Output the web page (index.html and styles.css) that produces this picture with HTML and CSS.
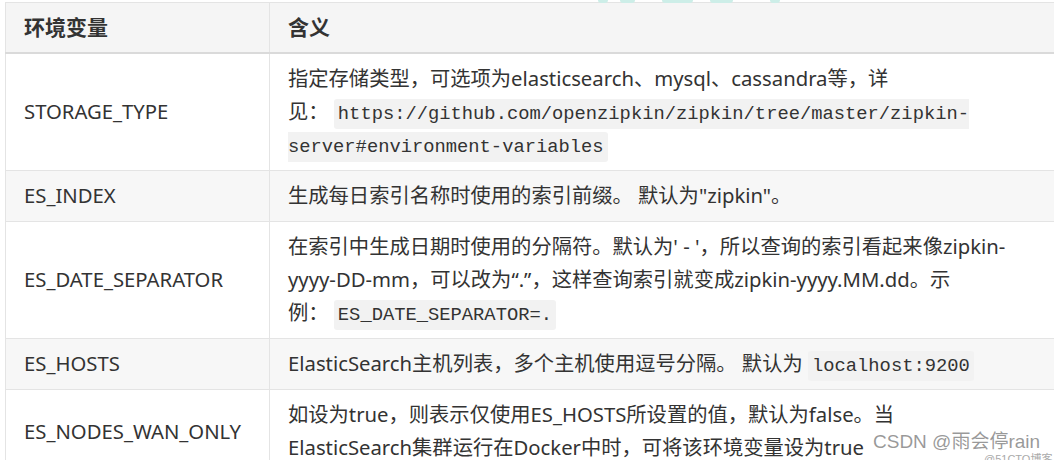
FILE: index.html
```html
<!DOCTYPE html>
<html lang="zh-CN">
<head>
  <meta charset="UTF-8">
  <title>Zipkin 环境变量</title>
  <link rel="stylesheet" href="styles.css">
</head>
<body>
  <div class="logo-bits">
    <span class="bit b1"></span>
    <span class="bit b2"></span>
    <span class="bit b3"></span>
    <span class="bit b4"></span>
    <span class="bit b5"></span>
  </div>

  <table class="env-table">
    <thead>
      <tr>
        <th class="name">环境变量</th>
        <th>含义</th>
      </tr>
    </thead>
    <tbody>
      <tr>
        <td class="name">STORAGE_TYPE</td>
        <td>指定存储类型，可选项为elasticsearch、mysql、cassandra等，详<br>见： <code>https://github.com/openzipkin/zipkin/tree/master/zipkin-<br>server#environment-variables</code></td>
      </tr>
      <tr class="alt">
        <td class="name">ES_INDEX</td>
        <td>生成每日索引名称时使用的索引前缀。 默认为"zipkin"。</td>
      </tr>
      <tr>
        <td class="name">ES_DATE_SEPARATOR</td>
        <td>在索引中生成日期时使用的分隔符。默认为' - '，所以查询的索引看起来像zipkin-<br>yyyy-DD-mm，可以改为“.”，这样查询索引就变成zipkin-yyyy.MM.dd。示<br>例： <code>ES_DATE_SEPARATOR=.</code></td>
      </tr>
      <tr class="alt">
        <td class="name">ES_HOSTS</td>
        <td>ElasticSearch主机列表，多个主机使用逗号分隔。 默认为 <code>localhost:9200</code></td>
      </tr>
      <tr>
        <td class="name">ES_NODES_WAN_ONLY</td>
        <td>如设为true，则表示仅使用ES_HOSTS所设置的值，默认为false。当<br>ElasticSearch集群运行在Docker中时，可将该环境变量设为true</td>
      </tr>
    </tbody>
  </table>

  <div class="watermark">CSDN @雨会停rain</div>
  <div class="watermark-small">@51CTO博客</div>
</body>
</html>
```

FILE: styles.css
```css
html, body {
  margin: 0;
  padding: 0;
  width: 100%;
  height: 100%;
  overflow: hidden;
  background: #fff;
}
body {
  padding: 2px 0 0 5px;
  box-sizing: border-box;
  position: relative;
  font-family: "Noto Sans", "Noto Sans CJK SC", sans-serif;
  font-size: 20.3px;
  color: #333;
}
.env-table {
  border-collapse: collapse;
  width: 1100px;
}
.env-table th,
.env-table td {
  border: 1px solid #e4e4e4;
  padding: 8px 18px 9px;
  line-height: 33px;
  text-align: left;
  vertical-align: middle;
  white-space: nowrap;
}
.env-table th {
  background: #f5f5f5;
  font-size: 21px;
  font-weight: bold;
  border-bottom: 2px solid #dadada;
  padding-top: 8px;
  padding-bottom: 8px;
}
.env-table .name {
  width: 227px;
}
.env-table tr.alt td {
  background: #f7f7f7;
}
.env-table code {
  font-family: "Liberation Mono", monospace;
  font-size: 18.8px;
  line-height: 1;
  background: #f2f2f2;
  border-radius: 3px;
  padding: 4px 4px;
  color: #333;
}
/* 顶部被截掉的 logo 边缘 */
.logo-bits {
  position: absolute;
  top: 0;
  left: 0;
}
.bit {
  position: absolute;
  top: 0;
  height: 3px;
  background: #cdeee8;
  border-radius: 0 0 3px 3px;
}
.b1 { left: 598px; width: 10px; }
.b2 { left: 620px; width: 15px; }
.b3 { left: 662px; width: 31px; }
.b4 { left: 710px; width: 23px; }
.b5 { left: 770px; width: 10px; }
.watermark {
  position: absolute;
  left: 873px;
  top: 426px;
  font-family: "Liberation Sans", "Noto Sans CJK SC", sans-serif;
  font-size: 19px;
  color: rgba(120, 120, 120, 0.75);
  white-space: nowrap;
}
.watermark-small {
  position: absolute;
  left: 984px;
  top: 450px;
  font-family: "Liberation Sans", "Noto Sans CJK SC", sans-serif;
  font-size: 11px;
  color: #aaa;
  white-space: nowrap;
}
```
